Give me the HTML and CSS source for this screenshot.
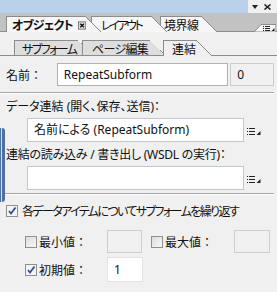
FILE: index.html
```html
<!DOCTYPE html>
<html lang="ja">
<head>
    <meta charset="UTF-8">
    <title>オブジェクト</title>
    <link rel="stylesheet" href="styles.css">
</head>
<body>
    <div class="panel">
        <div class="titlebar">
            <div class="title-fill"></div>
            <div class="title-btns">
                <svg width="6" height="4" viewBox="0 0 6 4"><path d="M0 0h6L3 4z" fill="#222"/></svg>
                <svg width="7" height="6" viewBox="0 0 7 6"><path d="M0.5 0.5l6 5M6.5 0.5l-6 5" stroke="#222" stroke-width="1.6"/></svg>
            </div>
        </div>

        <div class="tabbar">
            <div class="tab t1 active"><span class="tab-text">オブジェクト</span><svg class="tab-close" width="9" height="9" viewBox="0 0 9 9"><rect x="0.5" y="0.5" width="8" height="8" fill="#e4e4e4" stroke="#6f6f6f"/><path d="M2.5 2.5l4 4M6.5 2.5l-4 4" stroke="#111" stroke-width="1.5"/></svg></div>
            <div class="tab t2"><span class="tab-text">レイアウト</span></div>
            <div class="tab t3"><span class="tab-text">境界線</span></div>
            <svg class="tab-menu" width="22" height="9" viewBox="0 0 22 9">
                <path d="M0 9L7 1.5H22V9z" fill="#f5f5f5" stroke="#8c8c8c"/>
                <path d="M9 3.5h1M11 3.5h5M9 5.5h1M11 5.5h5M9 7.5h1M11 7.5h5" stroke="#222"/>
                <path d="M20.5 5v3h-3z" fill="#222"/>
            </svg>
        </div>

        <div class="subtabs">
            <div class="subtab s1"><span class="tab-text">サブフォーム</span></div>
            <div class="subtab s2"><span class="tab-text">ページ編集</span></div>
            <div class="subtab s3 active"><span class="tab-text">連結</span></div>
        </div>

        <div class="content">
            <div class="name-row">
                <span class="name-label">名前：</span>
                <div class="field focus name-field">RepeatSubform</div>
                <div class="field readonly count-field">0</div>
            </div>
            <div class="sep"></div>

            <div class="label">データ連結 (開く、保存、送信)：</div>
            <div class="bind-row">
                <div class="field bind-field">名前による (RepeatSubform)</div>
                <svg class="list-icon" width="15" height="7" viewBox="0 0 15 7"><path d="M0 0.5h1M2 0.5h6M0 3.5h1M2 3.5h6M0 6.5h1M2 6.5h6" stroke="#222"/><path d="M13.5 3v4h-4z" fill="#222"/></svg>
            </div>

            <div class="label label-wsdl">連結の読み込み / 書き出し (WSDL の実行)：</div>
            <div class="bind-row">
                <div class="field bind-field"></div>
                <svg class="list-icon" width="15" height="7" viewBox="0 0 15 7"><path d="M0 0.5h1M2 0.5h6M0 3.5h1M2 3.5h6M0 6.5h1M2 6.5h6" stroke="#222"/><path d="M13.5 3v4h-4z" fill="#222"/></svg>
            </div>
            <div class="sep sep2"></div>

            <div class="check-row">
                <span class="check checked"></span>
                <span class="repeat-text">各データアイテムについてサブフォームを繰り返す</span>
            </div>

            <div class="opt-row">
                <div class="opt"><span class="check"></span><span class="opt-label">最小値：</span></div>
                <div class="field disabled small-field"></div>
                <div class="opt opt-max"><span class="check"></span><span class="opt-label">最大値：</span></div>
                <div class="field disabled small-field max-field"></div>
            </div>
            <div class="opt-row init-row">
                <div class="opt"><span class="check checked"></span><span class="opt-label">初期値：</span></div>
                <div class="field init-field">1</div>
            </div>
        </div>

        <div class="side-grip"></div>
    </div>
</body>
</html>
```

FILE: styles.css
```css
body {
    margin: 0;
    background-color: #f0f0f0;
    font-family: "Noto Sans", "Noto Sans CJK JP", sans-serif;
    font-size: 12px;
    color: #111;
    font-feature-settings: "palt";
}
.panel {
    position: relative;
    width: 277px;
    height: 292px;
    overflow: hidden;
}

/* title bar */
.titlebar {
    display: flex;
    height: 13px;
}
.title-fill {
    flex: 1;
    background-color: #b9d1ea;
}
.title-btns {
    width: 29px;
    display: flex;
    align-items: center;
    justify-content: flex-end;
    gap: 6px;
    padding-right: 6px;
    box-sizing: border-box;
    background-color: #f0f0f0;
}

/* top tabs */
.tabbar {
    display: flex;
    align-items: flex-end;
    height: 18px;
    padding-left: 6px;
    background-color: #c2c2c2;
    border-bottom: 1px solid #8c8c8c;
}
.tab {
    position: relative;
    height: 14px;
    margin-bottom: -1px;
    padding-bottom: 1px;
    background-color: #f6f6f6;
    border-top: 1px solid #8c8c8c;
    border-left: 1px solid #8c8c8c;
    display: flex;
    align-items: flex-start;
    white-space: nowrap;
}
.tab .tab-text {
    line-height: 18px;
    height: 14px;
}
.tab::after {
    content: "";
    position: absolute;
    top: -1px;
    right: -15px;
    width: 15px;
    bottom: 0;
    background: linear-gradient(to top right, #f6f6f6 calc(50% - 0.7px), #8c8c8c calc(50% - 0.7px), #8c8c8c 50%, transparent 50%);
}
.tab.active {
    font-weight: bold;
}
.t1 {
    width: 74px;
    padding-left: 5px;
    z-index: 3;
}
.t1 .tab-text {
    letter-spacing: -0.8px;
}
.t2 {
    width: 51px;
    margin-left: 5px;
    padding-left: 9px;
    z-index: 2;
}
.t2 .tab-text {
    letter-spacing: -2.4px;
}
.t3 {
    width: 38px;
    margin-left: 8px;
    padding-left: 3px;
    z-index: 1;
}
.t3 .tab-text {
    letter-spacing: -0.5px;
}
.tab-close {
    margin: 4px 0 0 5px;
}
.tab-menu {
    margin-left: auto;
    margin-right: 1px;
    margin-bottom: -1px;
}

/* sub tabs */
.subtabs {
    display: flex;
    align-items: flex-end;
    height: 23px;
    padding-left: 14px;
    border-bottom: 1px solid #8c8c8c;
}
.subtab {
    position: relative;
    height: 14px;
    line-height: 18px;
    background-color: #dedede;
    border-top: 1px solid #8c8c8c;
    border-left: 1px solid #8c8c8c;
    white-space: nowrap;
}
.subtab::after {
    content: "";
    position: absolute;
    top: -1px;
    right: -15px;
    width: 15px;
    bottom: 0;
    background: linear-gradient(to top right, #dedede calc(50% - 0.7px), #8c8c8c calc(50% - 0.7px), #8c8c8c 50%, transparent 50%);
}
.s1 {
    width: 56px;
    padding-left: 7px;
    z-index: 1;
}
.s1 .tab-text {
    letter-spacing: -1.6px;
}
.s2 {
    width: 58px;
    margin-left: 4px;
    padding-left: 9px;
    z-index: 2;
}
.s2 .tab-text {
    letter-spacing: -0.7px;
}
.s3 {
    width: 25px;
    margin-left: 13px;
    padding-left: 8px;
    z-index: 3;
}
.subtab.active {
    background-color: #f0f0f0;
    margin-bottom: -1px;
    padding-bottom: 1px;
}
.subtab.active::after {
    background: linear-gradient(to top right, #f0f0f0 calc(50% - 0.7px), #8c8c8c calc(50% - 0.7px), #8c8c8c 50%, transparent 50%);
}

/* form */
.content {
    padding: 7px 3px 0 6px;
}
.field {
    box-sizing: border-box;
    height: 23px;
    line-height: 21px;
    padding-left: 6px;
    background-color: #fff;
    border: 1px solid #c3c6cc;
    white-space: nowrap;
    overflow: hidden;
}
.field.focus {
    border-color: #8fb8e3;
}
.field.readonly, .field.disabled {
    background-color: #f0f0f0;
    border-color: #cdcdcd;
}
.name-row {
    display: flex;
    align-items: center;
}
.name-label {
    width: 51px;
    font-feature-settings: normal;
}
.name-field {
    width: 172px;
}
.count-field {
    width: 44px;
    margin-left: 2px;
}
.sep {
    height: 0;
    margin: 6px 0 0 -6px;
    border-top: 1px solid #a6a6a6;
    border-bottom: 1px solid #ffffff;
}
.label {
    margin-top: 5px;
    height: 15px;
    line-height: 15px;
    white-space: nowrap;
}
.label-wsdl {
    letter-spacing: -0.25px;
}
.bind-row {
    display: flex;
    align-items: flex-end;
    margin-top: 4px;
    padding-left: 21px;
}
.bind-field {
    width: 217px;
    height: 24px;
    line-height: 22px;
}
.list-icon {
    margin: 0 0 7px 3px;
}
.sep2 {
    margin-top: 3px;
}
.check-row {
    display: flex;
    align-items: center;
    gap: 4px;
    margin-top: 7px;
    white-space: nowrap;
}
.repeat-text {
    letter-spacing: -1.6px;
}
.check {
    box-sizing: border-box;
    width: 12px;
    height: 12px;
    border: 1px solid #8e8f8f;
    background: linear-gradient(135deg, #dcdcdc, #f7f7f7);
    flex: none;
}
.check.checked {
    background: #f4f4f4 url("data:image/svg+xml,%3Csvg xmlns='http://www.w3.org/2000/svg' width='10' height='10' viewBox='0 0 10 10'%3E%3Cpath d='M2 5l2 2.5L8.5 1.5' fill='none' stroke='%23344f8e' stroke-width='1.8'/%3E%3C/svg%3E") center no-repeat;
}
.opt-row {
    display: flex;
    align-items: center;
    margin-top: 10px;
    padding-left: 19px;
}
.init-row {
    margin-top: 4px;
}
.opt {
    display: flex;
    align-items: center;
    gap: 2px;
    width: 82px;
    white-space: nowrap;
}
.opt-label {
    font-feature-settings: normal;
}
.small-field {
    width: 35px;
}
.opt-max {
    margin-left: 9px;
    width: 83px;
}
.max-field {
    width: 36px;
}
.init-field {
    width: 36px;
    height: 25px;
    line-height: 23px;
    border-color: #e2e2e2;
}

/* collapsed side panel grip */
.side-grip {
    position: absolute;
    left: 0;
    top: 128px;
    width: 5px;
    height: 74px;
    border-radius: 0 3px 3px 0;
    background-color: #4a70aa;
    background-image: radial-gradient(circle, #d8e2f2 0.7px, transparent 1px);
    background-size: 5px 2px;
    background-position: -1px 0;
}
```
